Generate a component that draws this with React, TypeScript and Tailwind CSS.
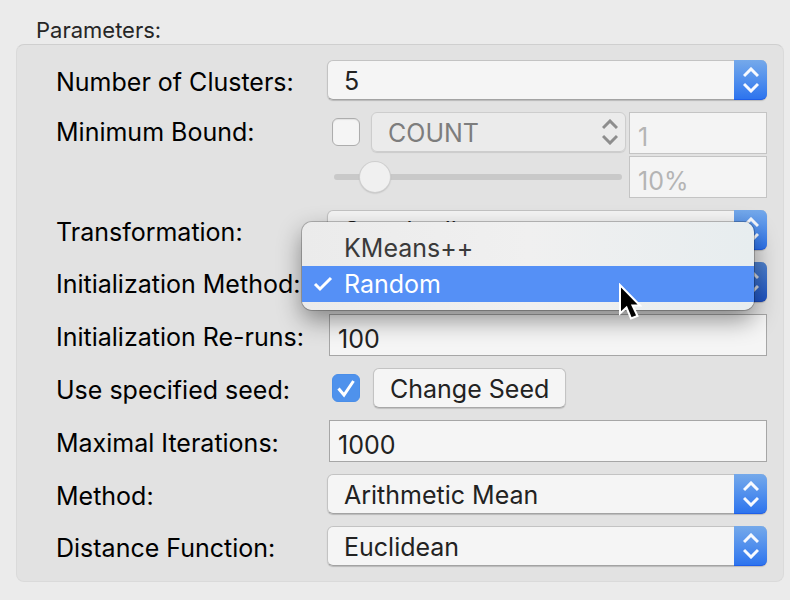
import { useId, useState, type ReactNode } from "react";

function Chevrons() {
  return (
    <svg width="16" height="26" viewBox="0 0 16 26" fill="none" stroke="currentColor" strokeWidth="3" aria-hidden="true">
      <path d="M1 9 8 2l7 7M1 17l7 7 7-7" />
    </svg>
  );
}

function Row({ label, id, children, tall = false }: { label: string; id: string; children: ReactNode; tall?: boolean }) {
  return (
    <div className={tall ? "flex items-start" : "flex items-center"}>
      <label htmlFor={id} className="w-[271px] shrink-0 pt-1 leading-8 whitespace-nowrap text-black">
        {label}
      </label>
      {children}
    </div>
  );
}

function Popup({ id, options, pressed = false }: { id: string; options: string[]; pressed?: boolean }) {
  return (
    <div className="relative flex min-w-0 flex-1 rounded-md shadow-[0_1px_1px_rgba(0,0,0,0.18)]">
      <select
        id={id}
        className="h-10 w-full appearance-none rounded-md border border-[#c3c3c3] border-b-[#a3a3a3] bg-[#f5f5f5] pt-0.5 pr-10 pl-4 text-[#222] outline-none"
      >
        {options.map((option) => (
          <option key={option}>{option}</option>
        ))}
      </select>
      <span
        className={
          pressed
            ? "pointer-events-none absolute inset-y-0 right-0 flex w-[33px] items-center justify-center rounded-r-md border-b border-[#1a48b8] bg-linear-to-b from-[#4f82cf] to-[#1f54c4] text-[#d5d9e2]"
            : "pointer-events-none absolute inset-y-0 right-0 flex w-[33px] items-center justify-center rounded-r-md border-b border-[#1f5fe8] bg-linear-to-b from-[#75a9ea] to-[#2d74ee] text-[#f8faff]"
        }
      >
        <Chevrons />
      </span>
    </div>
  );
}

function Field({ id, value }: { id: string; value: string }) {
  return (
    <input
      id={id}
      type="text"
      defaultValue={value}
      className="ml-0.5 h-[42px] min-w-0 flex-1 border border-[#a6a6a6] bg-[#f5f5f5] px-2 pt-2 text-[#222] outline-none"
    />
  );
}

function BoundField({ label, value }: { label: string; value: string }) {
  return (
    <input
      type="text"
      aria-label={label}
      defaultValue={value}
      disabled
      className="h-[42px] w-full border border-[#c4c4c4] bg-[#f4f4f4] px-2 pt-2 text-[#b4b4b4]"
    />
  );
}

function MethodMenu() {
  return (
    <div className="absolute -top-10 right-[13px] -left-[25px] z-10">
      <ul
        role="listbox"
        aria-label="Initialization Method"
        className="rounded-[10px] bg-linear-to-r from-[#ebebeb] via-[#f0f0f0] to-[#e7edef] py-2 shadow-[0_0_0_1px_rgba(0,0,0,0.22),0_10px_24px_rgba(0,0,0,0.42)]"
      >
        <li role="option" aria-selected="false" className="pl-[42px] leading-9 text-[#3a3a3a]">
          KMeans++
        </li>
        <li role="option" aria-selected="true" className="flex items-center bg-[#5590f6] leading-9 text-white">
          <span className="flex w-[42px] justify-center">
            <svg width="20" height="18" viewBox="0 0 20 18" fill="none" stroke="currentColor" strokeWidth="3" aria-hidden="true">
              <path d="m2 9 5 5L18 3" />
            </svg>
          </span>
          Random
        </li>
      </ul>
      <svg className="absolute top-[61px] right-[112px]" width="24" height="38" viewBox="0 0 24 38" aria-hidden="true">
        <path d="M2 2v28.500l6.500-6 4.500 11 6.500-2.500-5-10.500H22Z" fill="#000" stroke="#fff" strokeWidth="2" />
      </svg>
    </div>
  );
}

export default function App() {
  const base = useId();
  const [seeded, setSeeded] = useState(true);
  const id = (name: string) => `${base}-${name}`;

  return (
    <main className="min-h-screen bg-[#ebebeb] pt-4 pr-1.5 pb-4 pl-4 font-['Inter',sans-serif] text-[25px]">
      <h1 className="pl-5 text-[22px] leading-7 text-[#262626]">Parameters:</h1>
      <section className="flex flex-col gap-3 rounded-lg border border-[#dadada] border-t-[#cfcfcf] bg-[#e2e2e2] py-[15px] pr-4 pl-[39px]">
        <Row label="Number of Clusters:" id={id("clusters")}>
          <Popup id={id("clusters")} options={["5", "6", "7"]} />
        </Row>

        <Row label="Minimum Bound:" id={id("bound")} tall>
          <div className="flex min-w-0 flex-1 gap-[3px]">
            <div className="flex min-w-0 flex-1 flex-col">
              <div className="flex items-center">
                <input
                  id={id("bound")}
                  type="checkbox"
                  className="mr-[11px] ml-[5px] size-7 shrink-0 appearance-none rounded-md border border-[#adadad] bg-[#f5f5f5] shadow-[inset_0_1px_1px_rgba(0,0,0,0.08)]"
                />
                <div className="relative flex min-w-0 flex-1 rounded-md shadow-[0_1px_1px_rgba(0,0,0,0.1)]">
                  <select
                    aria-label="Bound type"
                    disabled
                    className="h-10 w-full appearance-none rounded-md border border-[#cdcdcd] bg-[#ebebeb] pt-0.5 pl-4 text-[#7d7d7d] opacity-100"
                  >
                    <option>COUNT</option>
                    <option>PERCENT</option>
                  </select>
                  <span className="pointer-events-none absolute inset-y-0 right-2 flex items-center text-[#8d8d8d]">
                    <Chevrons />
                  </span>
                </div>
              </div>
              <input
                type="range"
                aria-label="Bound percentage"
                min={0}
                max={100}
                defaultValue={10}
                disabled
                className="mt-[9px] mr-1 ml-[7px] h-8 appearance-none bg-transparent [&::-webkit-slider-runnable-track]:h-1.5 [&::-webkit-slider-runnable-track]:rounded-full [&::-webkit-slider-runnable-track]:bg-[#c9c9c9] [&::-webkit-slider-thumb]:-mt-3 [&::-webkit-slider-thumb]:size-[30px] [&::-webkit-slider-thumb]:appearance-none [&::-webkit-slider-thumb]:rounded-full [&::-webkit-slider-thumb]:bg-[#f0f0f0] [&::-webkit-slider-thumb]:shadow-[0_0_0_1px_#cfcfcf,0_1px_2px_rgba(0,0,0,0.3)]"
              />
            </div>
            <div className="flex w-[138px] shrink-0 flex-col gap-0.5">
              <BoundField label="Minimum count" value="1" />
              <BoundField label="Minimum percentage" value="10%" />
            </div>
          </div>
        </Row>

        <Row label="Transformation:" id={id("transformation")}>
          <Popup id={id("transformation")} options={["Standardize", "Raw"]} />
        </Row>

        <Row label="Initialization Method:" id={id("init")}>
          <div className="relative flex min-w-0 flex-1">
            <Popup id={id("init")} options={["Random", "KMeans++"]} pressed />
            <MethodMenu />
          </div>
        </Row>

        <Row label="Initialization Re-runs:" id={id("reruns")}>
          <Field id={id("reruns")} value="100" />
        </Row>

        <Row label="Use specified seed:" id={id("seed")}>
          <div className="relative mr-[13px] ml-[5px] flex size-7 shrink-0">
            <input
              id={id("seed")}
              type="checkbox"
              checked={seeded}
              onChange={(event) => setSeeded(event.target.checked)}
              className="peer size-7 appearance-none rounded-md border border-[#adadad] bg-[#f5f5f5] checked:border-[#4a8ee8] checked:bg-[#4f92ec]"
            />
            <svg
              className="pointer-events-none absolute inset-0 hidden text-white peer-checked:block"
              width="28"
              height="28"
              viewBox="0 0 28 28"
              fill="none"
              stroke="currentColor"
              strokeWidth="3"
              aria-hidden="true"
            >
              <path d="m6.500 14.500 5.500 6.500L21.500 7" />
            </svg>
          </div>
          <button
            type="button"
            className="h-10 rounded-md border border-[#c3c3c3] border-b-[#a8a8a8] bg-[#f5f5f5] px-4 pt-0.5 text-[#222] shadow-[0_1px_1px_rgba(0,0,0,0.15)]"
          >
            Change Seed
          </button>
        </Row>

        <Row label="Maximal Iterations:" id={id("iterations")}>
          <Field id={id("iterations")} value="1000" />
        </Row>

        <Row label="Method:" id={id("method")}>
          <Popup id={id("method")} options={["Arithmetic Mean", "Arithmetic Median"]} />
        </Row>

        <Row label="Distance Function:" id={id("distance")}>
          <Popup id={id("distance")} options={["Euclidean", "Manhattan"]} />
        </Row>
      </section>
    </main>
  );
}
